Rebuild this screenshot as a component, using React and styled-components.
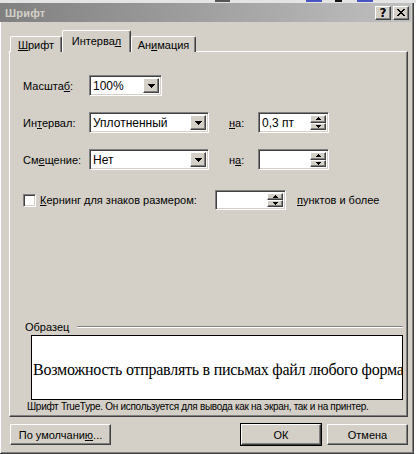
import React from 'react';
import styled, { createGlobalStyle, css } from 'styled-components';

const Global = createGlobalStyle`
  html, body {
    margin: 0;
    padding: 0;
    background: #fff;
  }
  body {
    font-family: 'Liberation Sans', Arial, sans-serif;
    font-size: 11px;
    color: #000;
  }
`;

const raised = css`
  background: #d4d0c8;
  border: 1px solid;
  border-color: #fff #404040 #404040 #fff;
  box-shadow: inset -1px -1px #808080;
`;

const sunken = css`
  background: #fff;
  border: 1px solid;
  border-color: #808080 #fff #fff #808080;
  box-shadow: inset 1px 1px #404040, inset -1px -1px #d4d0c8;
`;

const Screen = styled.div`
  width: 416px;
  height: 454px;
  display: flex;
  flex-direction: column;
  overflow: hidden;
`;

// strip of the window behind the dialog
const TopStrip = styled.div`
  height: 3px;
  flex: none;
  background:
    linear-gradient(90deg,
      transparent 215px, #555 215px, #555 230px, transparent 230px,
      transparent 306px, #4a55c4 306px, #4a55c4 322px, transparent 322px,
      transparent 335px, #111 335px, #111 342px, transparent 342px,
      transparent 357px, #4a55c4 357px, #4a55c4 373px, transparent 373px)
      top left / 100% 2px no-repeat,
    #e4e4e4;
`;

const Window = styled.div`
  width: 414px;
  height: 451px;
  box-sizing: border-box;
  background: #d4d0c8;
  border-right: 1px solid #404040;
  border-bottom: 1px solid #404040;
  box-shadow: inset -1px -1px #808080;
  display: flex;
  flex-direction: column;
`;

const TitleBar = styled.div`
  height: 19px;
  flex: none;
  margin-right: 2px;
  display: flex;
  align-items: center;
  justify-content: space-between;
  padding: 0 2px 0 5px;
  background: linear-gradient(90deg, #808080 0%, #c0c0c0 100%);
`;

const TitleText = styled.div`
  font-weight: bold;
  font-size: 11px;
  color: #d4d0c8;
  letter-spacing: 0.2px;
`;

const TitleButtons = styled.div`
  display: flex;
  gap: 2px;
`;

const TitleBtn = styled.div`
  ${raised};
  box-sizing: border-box;
  width: 16px;
  height: 14px;
  display: flex;
  align-items: center;
  justify-content: center;
  font-weight: bold;
  font-size: 12px;
  font-family: 'DejaVu Sans', sans-serif;
  line-height: 1;
`;

const Body = styled.div`
  flex: 1;
  display: flex;
  flex-direction: column;
  border-left: 1px solid #fff;
  padding: 8px 0 0 8px;
`;

const Tabs = styled.div`
  display: flex;
  align-items: flex-end;
  height: 22px;
  margin-left: 1px;
  margin-bottom: -1px;
  position: relative;
  z-index: 1;
`;

const Tab = styled.div`
  box-sizing: border-box;
  width: ${p => p.$w}px;
  height: ${p => (p.$active ? 22 : 16)}px;
  background: #d4d0c8;
  border-top: 1px solid #fff;
  border-left: 1px solid #fff;
  border-right: 1px solid #404040;
  box-shadow: inset -1px 0 #808080;
  border-radius: 2px 2px 0 0;
  display: flex;
  align-items: center;
  justify-content: center;
  padding-bottom: ${p => (p.$active ? 1 : 0)}px;
  font-size: 11px;
`;

const Key = styled.span`
  text-decoration: underline;
  text-underline-offset: 1px;
`;

const Panel = styled.div`
  box-sizing: border-box;
  width: 399px;
  height: 366px;
  border: 1px solid;
  border-color: #fff #404040 #404040 #fff;
  box-shadow: inset -1px -1px #808080;
  display: flex;
  flex-direction: column;
  padding: 23px 0 0 13px;
`;

const FormGrid = styled.div`
  display: grid;
  grid-template-columns: 66px 140px 29px 71px;
  grid-auto-rows: 21px;
  row-gap: 16px;
  align-items: center;
`;

const RowLabel = styled.div`
  grid-column: 1;
`;

const NaLabel = styled.div`
  grid-column: 3;
`;

const Field = styled.div`
  ${sunken};
  box-sizing: border-box;
  width: ${p => p.$w}px;
  height: ${p => p.$h || 21}px;
  display: flex;
  align-items: stretch;
  padding: 2px;
`;

const FieldText = styled.div`
  flex: 1;
  display: flex;
  align-items: center;
  padding-left: 1px;
  font-size: 12px;
  white-space: nowrap;
  overflow: hidden;
`;

const DropBtn = styled.div`
  ${raised};
  box-sizing: border-box;
  width: 16px;
  display: flex;
  align-items: center;
  justify-content: center;
`;

const SpinCol = styled.div`
  width: 16px;
  display: flex;
  flex-direction: column;
`;

const SpinBtn = styled.div`
  ${raised};
  box-sizing: border-box;
  flex: 1;
  display: flex;
  align-items: center;
  justify-content: center;
`;

const Arrow = ({ up, size = 4 }) => {
  const rows = [];
  for (let i = 0; i < size; i++) {
    const y = up ? size - 1 - i : i;
    rows.push(<rect key={i} x={i} y={y} width={size * 2 - 1 - i * 2} height={1} />);
  }
  return (
    <svg width={size * 2 - 1} height={size} shapeRendering="crispEdges">
      <g fill="#000">{rows}</g>
    </svg>
  );
};

const CloseGlyph = () => {
  const rects = [];
  for (let i = 0; i < 7; i++) {
    rects.push(<rect key={'a' + i} x={i} y={i} width={2} height={1} />);
    rects.push(<rect key={'b' + i} x={6 - i} y={i} width={2} height={1} />);
  }
  return (
    <svg width="8" height="7" shapeRendering="crispEdges">
      <g fill="#000">{rects}</g>
    </svg>
  );
};

const Select = ({ w, value }) => (
  <Field $w={w}>
    <FieldText>{value}</FieldText>
    <DropBtn>
      <Arrow />
    </DropBtn>
  </Field>
);

const Spin = ({ value, h }) => (
  <Field $w={71} $h={h}>
    <FieldText>{value}</FieldText>
    <SpinCol>
      <SpinBtn>
        <Arrow up size={3} />
      </SpinBtn>
      <SpinBtn>
        <Arrow size={3} />
      </SpinBtn>
    </SpinCol>
  </Field>
);

const CheckRow = styled.div`
  display: flex;
  align-items: center;
  margin-top: 20px;
  height: 20px;
`;

const CheckBox = styled.div`
  ${sunken};
  box-sizing: border-box;
  width: 13px;
  height: 13px;
  margin-right: 4px;
`;

const CheckLabel = styled.div`
  width: 175px;
`;

const AfterText = styled.div`
  margin-left: 11px;
`;

const SampleGroup = styled.div`
  margin-top: auto;
  display: flex;
  flex-direction: column;
  padding: 0 4px 3px 2px;
`;

const Legend = styled.div`
  display: flex;
  align-items: center;
  height: 13px;
  gap: 8px;
`;

const Etched = styled.div`
  flex: 1;
  height: 0;
  border-top: 1px solid #808080;
  border-bottom: 1px solid #fff;
`;

const SampleBox = styled.div`
  box-sizing: border-box;
  margin: 2px 0 0 6px;
  height: 65px;
  background: #fff;
  border: 1px solid #000;
  display: flex;
  align-items: center;
  overflow: hidden;
  padding-left: 1px;
`;

const SampleText = styled.div`
  font-family: 'Liberation Serif', 'Times New Roman', serif;
  font-size: 16px;
  letter-spacing: -0.25px;
  white-space: nowrap;
  padding-top: 5px;
`;

const Caption = styled.div`
  margin: 1px 0 0 2px;
  font-size: 10px;
  letter-spacing: -0.3px;
  height: 12px;
  line-height: 12px;
  white-space: nowrap;
`;

const ButtonRow = styled.div`
  display: flex;
  align-items: center;
  margin-top: 7px;
  padding-left: 1px;
  width: 398px;
`;

const Button = styled.div`
  ${raised};
  box-sizing: border-box;
  width: ${p => p.$w}px;
  height: 21px;
  margin-left: ${p => p.$gap || 0}px;
  display: flex;
  align-items: center;
  justify-content: center;
  font-size: 11px;
  ${p =>
    p.$default &&
    css`
      outline: 1px solid #000;
      outline-offset: 0;
    `}
`;

const Spacer = styled.div`
  flex: 1;
`;

export default function App() {
  return (
    <Screen>
      <Global />
      <TopStrip />
      <Window>
        <TitleBar>
          <TitleText>Шрифт</TitleText>
          <TitleButtons>
            <TitleBtn>?</TitleBtn>
            <TitleBtn>
              <CloseGlyph />
            </TitleBtn>
          </TitleButtons>
        </TitleBar>
        <Body>
          <Tabs>
            <Tab $w={52}>
              <span><Key>Ш</Key>рифт</span>
            </Tab>
            <Tab $w={69} $active>
              <span>Интерва<Key>л</Key></span>
            </Tab>
            <Tab $w={65}>
              <span>Ан<Key>и</Key>мация</span>
            </Tab>
          </Tabs>
          <Panel>
            <FormGrid>
              <RowLabel>Масшта<Key>б</Key>:</RowLabel>
              <Select w={73} value="100%" />
              <RowLabel>Ин<Key>т</Key>ервал:</RowLabel>
              <Select w={120} value="Уплотненный" />
              <NaLabel><Key>н</Key>а:</NaLabel>
              <Spin value="0,3 пт" />
              <RowLabel>См<Key>е</Key>щение:</RowLabel>
              <Select w={120} value="Нет" />
              <NaLabel>н<Key>а</Key>:</NaLabel>
              <Spin value="" />
            </FormGrid>
            <CheckRow>
              <CheckBox />
              <CheckLabel><Key>К</Key>ернинг для знаков размером:</CheckLabel>
              <Spin value="" h={20} />
              <AfterText><Key>п</Key>унктов и более</AfterText>
            </CheckRow>
            <SampleGroup>
              <Legend>
                <span>Образец</span>
                <Etched />
              </Legend>
              <SampleBox>
                <SampleText>Возможность отправлять в письмах файл любого формата</SampleText>
              </SampleBox>
              <Caption>Шрифт TrueType. Он используется для вывода как на экран, так и на принтер.</Caption>
            </SampleGroup>
          </Panel>
          <ButtonRow>
            <Button $w={101}>По умолчани<Key>ю</Key>...</Button>
            <Spacer />
            <Button $w={80} $default>ОК</Button>
            <Button $w={81} $gap={6}>Отмена</Button>
          </ButtonRow>
        </Body>
      </Window>
    </Screen>
  );
}
